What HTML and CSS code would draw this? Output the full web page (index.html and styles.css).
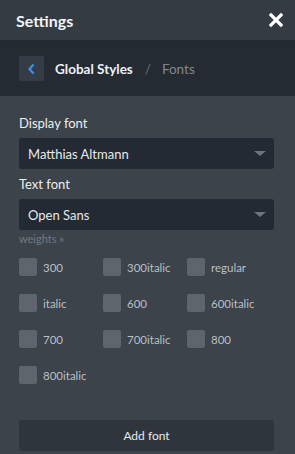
FILE: index.html
```html
<!DOCTYPE html>
<html>

<head>
    <meta charset="utf-8">
    <title>Settings</title>
    <link rel="stylesheet" href="styles.css">
</head>

<body>
    <div class="panel">
        <div class="panel-header">
            <span class="panel-title">Settings</span>
            <button class="close-btn" title="Close">
                <svg width="14" height="14" viewBox="0 0 14 14">
                    <path d="M2 2 L12 12 M12 2 L2 12" stroke="#fff" stroke-width="3.2" stroke-linecap="square" fill="none"/>
                </svg>
            </button>
        </div>
        <div class="crumbs">
            <button class="back-btn" title="Back">
                <svg width="9" height="12" viewBox="0 0 9 12">
                    <path d="M6.5 1.5 L2.5 6 L6.5 10.5" stroke="#3d8fe8" stroke-width="2.2" fill="none"/>
                </svg>
            </button>
            <span class="crumb-main">Global Styles</span>
            <span class="crumb-sep">/</span>
            <span class="crumb-sub">Fonts</span>
        </div>
        <div class="panel-body">
            <label class="field-label">Display font</label>
            <div class="select-box">
                <span>Matthias Altmann</span>
                <i class="caret"></i>
            </div>
            <label class="field-label">Text font</label>
            <div class="select-box">
                <span>Open Sans</span>
                <i class="caret"></i>
            </div>
            <div class="weights-link">weights »</div>
            <div class="weights">
                <div class="weight"><span class="check"></span>300</div>
                <div class="weight"><span class="check"></span>300italic</div>
                <div class="weight"><span class="check"></span>regular</div>
                <div class="weight"><span class="check"></span>italic</div>
                <div class="weight"><span class="check"></span>600</div>
                <div class="weight"><span class="check"></span>600italic</div>
                <div class="weight"><span class="check"></span>700</div>
                <div class="weight"><span class="check"></span>700italic</div>
                <div class="weight"><span class="check"></span>800</div>
                <div class="weight"><span class="check"></span>800italic</div>
            </div>
            <button class="add-btn">Add font</button>
        </div>
    </div>
</body>

</html>
```

FILE: styles.css
```css
html,
body {
    margin: 0;
    padding: 0;
    background: #3c434b;
}

body {
    font-family: Lato, "Noto Sans", sans-serif;
    color: #e9ecee;
}

.panel {
    width: 295px;
    height: 454px;
    display: flex;
    flex-direction: column;
    background: #3c434b;
    overflow: hidden;
}

.panel-header {
    height: 40px;
    display: flex;
    align-items: center;
    justify-content: space-between;
    padding: 0 12px 0 16px;
    background: #343b43;
    border-bottom: 1px solid #23292f;
}

.panel-title {
    font-size: 16px;
    font-weight: bold;
    color: #f2f4f5;
}

.close-btn {
    background: none;
    border: 0;
    padding: 0;
    width: 14px;
    height: 14px;
    display: flex;
    cursor: pointer;
}

.crumbs {
    height: 55px;
    display: flex;
    align-items: center;
    padding: 0 19px;
    background: #252b33;
}

.back-btn {
    width: 25px;
    height: 25px;
    border: 0;
    padding: 0;
    border-radius: 2px;
    background: #343d47;
    display: flex;
    align-items: center;
    justify-content: center;
    margin-right: 11px;
}

.crumb-main {
    font-size: 13.5px;
    font-weight: bold;
    color: #eef0f2;
}

.crumb-sep {
    font-size: 13.5px;
    color: #6b7279;
    margin: 0 11px 0 12px;
}

.crumb-sub {
    font-size: 13.5px;
    color: #80878e;
}

.panel-body {
    padding: 19px 21px 0 19px;
    display: flex;
    flex-direction: column;
}

.field-label {
    font-size: 13px;
    color: #eceef0;
    line-height: 17px;
    margin-bottom: 6px;
}

.select-box {
    height: 31px;
    border-radius: 3px;
    background: #232a33;
    display: flex;
    align-items: center;
    justify-content: space-between;
    padding: 0 8px 0 9px;
    font-size: 13px;
    color: #e6e8ea;
    margin-bottom: 7px;
}

.caret {
    width: 0;
    height: 0;
    border-left: 6px solid transparent;
    border-right: 6px solid transparent;
    border-top: 5px solid #6e747b;
}

.weights-link {
    font-size: 11px;
    color: #737a81;
    line-height: 14px;
    margin-top: -5px;
}

.weights {
    display: grid;
    grid-template-columns: 84px 84px 84px;
    row-gap: 18px;
    margin-top: 12px;
}

.weight {
    display: flex;
    align-items: center;
    height: 18px;
    font-size: 11.5px;
    color: #babfc3;
}

.check {
    width: 18px;
    height: 18px;
    border-radius: 2px;
    background: #5e656c;
    margin-right: 6px;
}

.add-btn {
    margin-top: 36px;
    height: 31px;
    border: 0;
    border-radius: 3px;
    background: #2e363c;
    color: #e6e8ea;
    font-family: Lato, "Noto Sans", sans-serif;
    font-size: 12px;
}
```
